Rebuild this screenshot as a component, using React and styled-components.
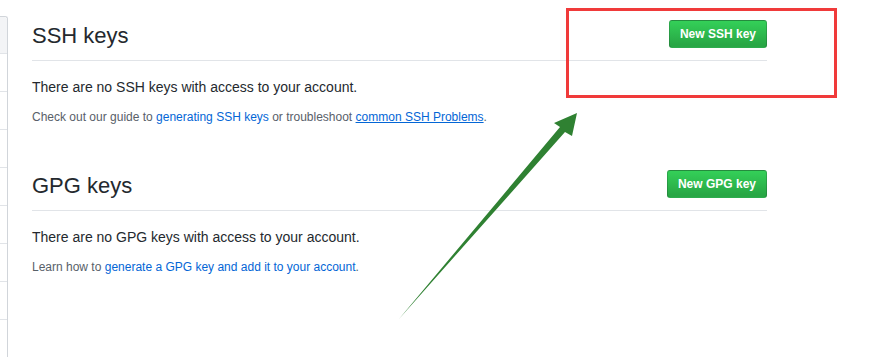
import styled, { createGlobalStyle } from 'styled-components';

const GlobalStyle = createGlobalStyle`
	body {
		margin: 0;
		background: #fff;
		font-family: 'Liberation Sans', Arial, sans-serif;
		color: #24292e;
	}
`;

const sideRows = 8;

export default function App() {
	return (
		<>
			<GlobalStyle />
			<Page>
				<Sidebar>
					<SideHeader />
					{Array.from({ length: sideRows }).map((_, i) => (
						<SideItem key={i} />
					))}
				</Sidebar>
				<Main>
					<Section>
						<Subhead>
							<Title>SSH keys</Title>
							<GreenButton>New SSH key</GreenButton>
						</Subhead>
						<Blank>There are no SSH keys with access to your account.</Blank>
						<Note>
							Check out our guide to <Link>generating SSH keys</Link> or troubleshoot{' '}
							<Link $underline>common SSH Problems</Link>.
						</Note>
					</Section>
					<Section>
						<Subhead>
							<Title>GPG keys</Title>
							<GreenButton>New GPG key</GreenButton>
						</Subhead>
						<Blank>There are no GPG keys with access to your account.</Blank>
						<Note>
							Learn how to <Link>generate a GPG key and add it to your account</Link>.
						</Note>
					</Section>
				</Main>
				<Highlight />
				<Arrow width='885' height='357' viewBox='0 0 885 357'>
					<polygon points='399,319 560,127 554,123 577,113 572,136 565,132' fill='#2f8132' />
				</Arrow>
			</Page>
		</>
	);
}

const Page = styled.div`
	position: relative;
	display: flex;
	align-items: flex-start;
	width: 885px;
	height: 357px;
	overflow: hidden;
`;

const Sidebar = styled.nav`
	flex: 0 0 7px;
	margin-top: 16px;
	border-top: 1px solid #d1d5da;
	border-right: 1px solid #d1d5da;
	border-top-right-radius: 3px;
	min-height: 360px;
`;

const SideHeader = styled.div`
	height: 36px;
	background: #f3f4f6;
	border-bottom: 1px solid #e1e4e8;
	border-top-right-radius: 3px;
`;

const SideItem = styled.div`
	height: 37px;
	border-bottom: 1px solid #e1e4e8;
`;

const Main = styled.main`
	width: 735px;
	margin-left: 24px;
	padding-top: 20px;
`;

const Section = styled.section`
	& + & {
		margin-top: 44px;
	}
`;

const Subhead = styled.div`
	display: flex;
	justify-content: space-between;
	align-items: flex-start;
	padding-bottom: 11px;
	border-bottom: 1px solid #e1e4e8;
`;

const Title = styled.h2`
	margin: 0;
	padding-top: 2px;
	font-size: 22px;
	font-weight: 400;
	line-height: 27px;
	color: #24292e;
`;

const GreenButton = styled.button`
	font-family: inherit;
	font-size: 12px;
	font-weight: 700;
	line-height: 20px;
	padding: 3px 10px;
	color: #fff;
	background-image: linear-gradient(-180deg, #34d058 0%, #28a745 90%);
	border: 1px solid rgba(27, 31, 35, 0.2);
	border-radius: 3px;
	cursor: pointer;
`;

const Blank = styled.p`
	margin: 16px 0 10px;
	font-size: 14px;
	line-height: 21px;
`;

const Note = styled.p`
	margin: 0;
	font-size: 12px;
	line-height: 18px;
	color: #586069;
`;

const Link = styled.a`
	color: #0366d6;
	text-decoration: ${p => (p.$underline ? 'underline' : 'none')};
	cursor: pointer;
`;

const Highlight = styled.div`
	position: absolute;
	left: 566px;
	top: 8px;
	width: 265px;
	height: 84px;
	border: 3px solid #f03a3a;
	pointer-events: none;
`;

const Arrow = styled.svg`
	position: absolute;
	left: 0;
	top: 0;
	pointer-events: none;
`;
